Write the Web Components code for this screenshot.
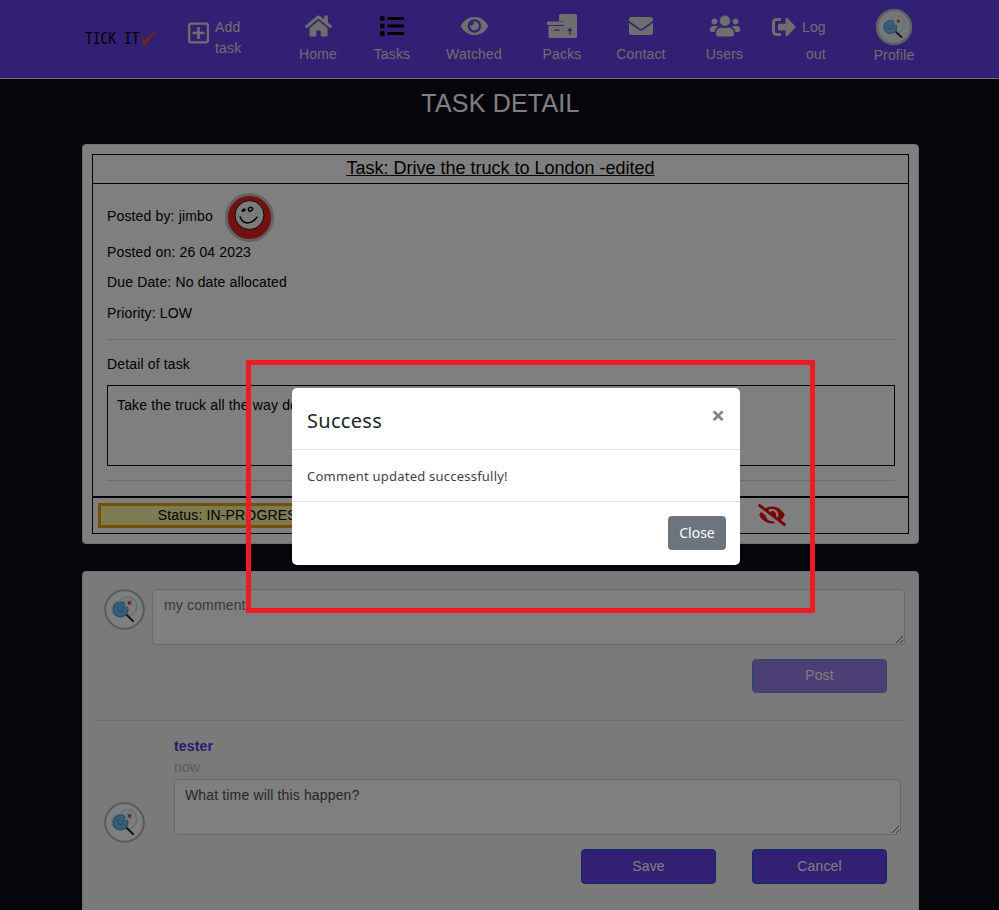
<!DOCTYPE html>
<html>
<head>
<meta charset="utf-8">
<title>Task detail</title>
<style>
    html, body {
        margin: 0;
        height: 910px;
        overflow: hidden;
        background: #0e0a18;
        font-family: "Liberation Sans", Arial, sans-serif;
        font-size: 14px;
        letter-spacing: .15px;
    }
</style>
</head>
<body>
<task-page></task-page>

<script>
//icons
const ICONS = {
    home: ['0 0 576 512', 'M280.37 148.26L96 300.11V464a16 16 0 0 0 16 16l112.06-.29a16 16 0 0 0 15.92-16V368a16 16 0 0 1 16-16h64a16 16 0 0 1 16 16v95.64a16 16 0 0 0 16 16.05L464 480a16 16 0 0 0 16-16V300L295.67 148.26a12.19 12.19 0 0 0-15.3 0zM571.6 251.47L488 182.56V44.05a12 12 0 0 0-12-12h-56a12 12 0 0 0-12 12v72.61L318.47 43a48 48 0 0 0-61 0L4.34 251.47a12 12 0 0 0-1.6 16.9l25.5 31A12 12 0 0 0 45.15 301l235.22-193.74a12.19 12.19 0 0 1 15.3 0L530.9 301a12 12 0 0 0 16.9-1.6l25.5-31a12 12 0 0 0-1.7-16.93z'],
    list: ['0 0 512 512', 'M80 368H16a16 16 0 0 0-16 16v64a16 16 0 0 0 16 16h64a16 16 0 0 0 16-16v-64a16 16 0 0 0-16-16zm0-320H16A16 16 0 0 0 0 64v64a16 16 0 0 0 16 16h64a16 16 0 0 0 16-16V64a16 16 0 0 0-16-16zm0 160H16a16 16 0 0 0-16 16v64a16 16 0 0 0 16 16h64a16 16 0 0 0 16-16v-64a16 16 0 0 0-16-16zm416 176H176a16 16 0 0 0-16 16v32a16 16 0 0 0 16 16h320a16 16 0 0 0 16-16v-32a16 16 0 0 0-16-16zm0-320H176a16 16 0 0 0-16 16v32a16 16 0 0 0 16 16h320a16 16 0 0 0 16-16V80a16 16 0 0 0-16-16zm0 160H176a16 16 0 0 0-16 16v32a16 16 0 0 0 16 16h320a16 16 0 0 0 16-16v-32a16 16 0 0 0-16-16z'],
    eye: ['0 0 576 512', 'M572.52 241.4C518.29 135.59 410.93 64 288 64S57.68 135.64 3.48 241.41a32.35 32.35 0 0 0 0 29.19C57.71 376.41 165.07 448 288 448s230.32-71.64 284.52-177.41a32.35 32.35 0 0 0 0-29.19zM288 400a144 144 0 1 1 144-144 143.93 143.93 0 0 1-144 144zm0-240a95.31 95.31 0 0 0-25.31 3.79 47.85 47.85 0 0 1-66.9 66.9A95.78 95.78 0 1 0 288 160z'],
    envelope: ['0 0 512 512', 'M502.3 190.8c3.9-3.1 9.7-.2 9.7 4.7V400c0 26.5-21.5 48-48 48H48c-26.5 0-48-21.5-48-48V195.6c0-5 5.7-7.8 9.7-4.7 22.4 17.4 52.1 39.5 154.1 113.6 21.1 15.4 56.7 47.8 92.2 47.6 35.7.3 72-32.8 92.3-47.6 102-74.1 131.6-96.3 154-113.7zM256 320c23.2.4 56.6-29.2 73.4-41.4 132.7-96.3 142.8-104.7 173.4-128.7 5.8-4.5 9.2-11.5 9.2-18.9v-19c0-26.5-21.5-48-48-48H48C21.5 64 0 85.5 0 112v19c0 7.4 3.4 14.3 9.2 18.9 30.6 23.9 40.7 32.4 173.4 128.7 16.8 12.2 50.2 41.8 73.4 41.4z'],
    users: ['0 0 640 512', 'M96 224c35.3 0 64-28.7 64-64s-28.7-64-64-64-64 28.7-64 64 28.7 64 64 64zm448 0c35.3 0 64-28.7 64-64s-28.7-64-64-64-64 28.7-64 64 28.7 64 64 64zm32 32h-64c-17.6 0-33.5 7.1-45.1 18.6 40.3 22.1 68.9 62 75.1 109.4h66c17.7 0 32-14.3 32-32v-32c0-35.3-28.7-64-64-64zm-256 0c61.9 0 112-50.1 112-112S381.9 32 320 32 208 82.1 208 144s50.1 112 112 112zm76.8 32h-8.3c-20.8 10-43.9 16-68.5 16s-47.6-6-68.5-16h-8.3C179.6 288 128 339.6 128 403.2V432c0 26.5 21.5 48 48 48h288c26.5 0 48-21.5 48-48v-28.8c0-63.6-51.6-115.2-115.2-115.2zm-223.7-13.4C161.5 263.1 145.6 256 128 256H64c-35.3 0-64 28.7-64 64v32c0 17.7 14.3 32 32 32h65.9c6.3-47.4 34.9-87.3 75.2-109.4z'],
    logout: ['0 0 512 512', 'M497 273L329 441c-15 15-41 4.5-41-17v-96H152c-13.3 0-24-10.7-24-24v-96c0-13.3 10.7-24 24-24h136V88c0-21.4 25.9-32 41-17l168 168c9.3 9.4 9.3 24.6 0 34zM192 436v-40c0-6.6-5.4-12-12-12H96c-17.7 0-32-14.3-32-32V160c0-17.7 14.3-32 32-32h84c6.6 0 12-5.4 12-12V76c0-6.6-5.4-12-12-12H96c-53 0-96 43-96 96v192c0 53 43 96 96 96h84c6.6 0 12-5.4 12-12z'],
    plus: ['0 0 448 512', 'M352 240v32c0 6.6-5.4 12-12 12h-88v88c0 6.6-5.4 12-12 12h-32c-6.6 0-12-5.4-12-12v-88h-88c-6.6 0-12-5.4-12-12v-32c0-6.6 5.4-12 12-12h88v-88c0-6.6 5.4-12 12-12h32c6.6 0 12 5.4 12 12v88h88c6.6 0 12 5.4 12 12zm96-160v352c0 26.5-21.5 48-48 48H48c-26.5 0-48-21.5-48-48V80c0-26.5 21.5-48 48-48h352c26.5 0 48 21.5 48 48zm-48 346V86c0-3.3-2.7-6-6-6H54c-3.3 0-6 2.7-6 6v340c0 3.3 2.7 6 6 6h340c3.3 0 6-2.7 6-6z'],
    eyeslash: ['0 0 640 512', 'M320 400c-75.85 0-137.25-58.71-142.9-133.11L72.2 185.82c-13.79 17.3-26.48 35.59-36.72 55.59a32.35 32.35 0 0 0 0 29.19C89.71 376.41 197.07 448 320 448c26.91 0 52.87-4 77.89-10.46L346 397.39a144.13 144.13 0 0 1-26 2.61zm313.82 58.1l-110.55-85.44a331.25 331.25 0 0 0 81.25-102.07 32.35 32.35 0 0 0 0-29.19C550.29 135.59 442.93 64 320 64a308.15 308.15 0 0 0-147.32 37.7L45.46 3.37A16 16 0 0 0 23 6.18L3.37 31.45A16 16 0 0 0 6.18 53.9l588.36 454.73a16 16 0 0 0 22.46-2.81l19.64-25.27a16 16 0 0 0-2.82-22.45zm-183.72-142l-39.3-30.38A94.75 94.75 0 0 0 416 256a94.76 94.76 0 0 0-121.31-92.21A47.65 47.65 0 0 1 304 192a46.64 46.64 0 0 1-1.54 10l-73.61-56.89A142.31 142.31 0 0 1 320 112a143.92 143.92 0 0 1 144 144c0 21.63-5.29 41.79-13.9 60.11z']
};

class FaIcon extends HTMLElement {
    constructor(){
        super();
        this.attachShadow({mode: 'open'});
        const icon = ICONS[this.getAttribute('name')];
        this.shadowRoot.innerHTML = `
        <style>
            :host { display: block; line-height: 0; }
            svg { width: 100%; height: 100%; fill: currentColor; display: block; }
        </style>
        <svg viewBox="${icon[0]}"><path d="${icon[1]}"/></svg>`;
    }
}
customElements.define('fa-icon', FaIcon);

class PacksIcon extends HTMLElement {
    constructor(){
        super();
        this.attachShadow({mode: 'open'});
        this.shadowRoot.innerHTML = `
        <style>
            :host { display: block; line-height: 0; }
        </style>
        <svg width="30" height="24" viewBox="0 0 30 24" fill="#dcdcdc">
            <path d="M12 1.500a1.500 1.500 0 0 1 1.500-1.500h15A1.500 1.500 0 0 1 30 1.500v21a1.500 1.500 0 0 1-1.500 1.500H17V7h-5z"/>
            <rect x="0" y="7.500" width="17" height="3.400" rx=".6"/>
            <path d="M1.500 12h15.500v12H2.500a1 1 0 0 1-1-1z"/>
            <rect x="7" y="15.500" width="5.500" height="1.300" fill="#6540ea"/>
            <path d="M23 13.500l2.800 3.600h-2.100V21h-1.400v-3.900h-2.100z" fill="#6540ea"/>
        </svg>`;
    }
}
customElements.define('packs-icon', PacksIcon);

//user pictures
class UserAvatar extends HTMLElement {
    constructor(){
        super();
        this.attachShadow({mode: 'open'});
        const kind = this.getAttribute('kind');
        const size = this.getAttribute('size');
        const ring = this.getAttribute('ring') || '#b4b4b4';
        const face = `
            <circle cx="50" cy="50" r="47" fill="#e62020" stroke="#c4c4c4" stroke-width="6"/>
            <circle cx="50" cy="45" r="29.500" fill="#f6f6f6" stroke="#000" stroke-width="1.800"/>
            <ellipse cx="38" cy="35" rx="4.500" ry="3.400" fill="#000" transform="rotate(-30 38 35)"/>
            <ellipse cx="52" cy="33" rx="4.500" ry="3.600" fill="none" stroke="#000" stroke-width="3" transform="rotate(-30 52 33)"/>
            <path d="M31 49q4 12 15 12 12 0 19-12" fill="none" stroke="#000" stroke-width="3" stroke-linecap="round"/>`;
        const lens = `
            <circle cx="50" cy="50" r="47" fill="${this.getAttribute('fill') || '#fff'}" stroke="${ring}" stroke-width="${this.getAttribute('stroke') || 5}"/>
            <ellipse cx="58" cy="42" rx="22" ry="23" fill="none" stroke="#cbe6f6" stroke-width="5"/>
            <ellipse cx="40" cy="48" rx="24" ry="22" fill="#dceff9"/>
            <circle cx="40" cy="50" r="18" fill="#72bbe8" stroke="#4f9fd2" stroke-width="3"/>
            <path d="M33 52q7 6 14 0" fill="none" stroke="#3a80ae" stroke-width="2"/>
            <circle cx="33" cy="46" r="1.800" fill="#3a80ae"/>
            <circle cx="46" cy="46" r="1.800" fill="#3a80ae"/>
            <path d="M56 64l15 14" stroke="#223" stroke-width="5" stroke-linecap="round"/>
            <rect x="52" y="24" width="20" height="20" rx="5" fill="#f4f4f4"/>
            <path d="M58 30l8 8m0-8l-8 8" stroke="#d0282e" stroke-width="3"/>`;
        this.shadowRoot.innerHTML = `
        <style>
            :host { display: block; line-height: 0; flex: none; width: ${size}px; height: ${size}px; }
        </style>
        <svg width="${size}" height="${size}" viewBox="0 0 100 100">${kind === 'smile' ? face : lens}</svg>`;
    }
}
customElements.define('user-avatar', UserAvatar);

//one link of the top bar
class NavItem extends HTMLElement {
    constructor(){
        super();
        this.attachShadow({mode: 'open'});
        this.shadowRoot.innerHTML = `
        <style>
            :host {
                display: flex;
                flex-direction: column;
                align-items: center;
                flex: none;
                color: #dcdcdc;
                font-size: 14px;
                width: var(--w);
            }
            .icon { height: 24px; margin-top: 14px; display: flex; align-items: center; justify-content: center; }
            .label { margin-top: 7px; line-height: 18px; }
        </style>
        <div class="icon"><slot name="icon"></slot></div>
        <div class="label"><slot></slot></div>`;
    }
}
customElements.define('nav-item', NavItem);

const headerTemplate = document.createElement('template');
headerTemplate.innerHTML = `
<style>
    :host {
        display: flex;
        height: 78px;
        background: #6540ea;
        border-bottom: 1px solid #e4e4e4;
        color: #dcdcdc;
    }
    .logo {
        width: 77px;
        margin-left: 85px;
        flex: none;
        display: flex;
        align-items: center;
    }
    .logo span {
        font-family: "DejaVu Sans Mono", monospace;
        font-size: 13px;
        letter-spacing: -.05px;
        color: #000;
        white-space: nowrap;
        flex: none;
        margin-top: -1px;
        transform: scaleY(1.15);
    }
    .logo svg { margin-left: 1px; margin-top: -3px; flex: none; }
    .add {
        display: flex;
        flex: none;
        margin-left: 26px;
        width: 93px;
    }
    .add fa-icon { width: 21px; height: 24px; margin-top: 21px; }
    .add .text { margin-left: 6px; margin-top: 17px; line-height: 20.5px; }
    .logout { width: 92px; flex: none; display: grid; grid-template-columns: 24px auto; grid-template-rows: auto auto; font-size: 14px; align-content: start; }
    .logout fa-icon { width: 24px; height: 24px; margin-top: 15px; }
    .logout .log { margin: 18px 0 0 6px; line-height: 18px; }
    .logout .out { grid-column: 2; margin: 6px 0 0 10px; line-height: 18px; }
    .logout .log, .logout .out { white-space: nowrap; }
    .profile-inner {
        display: flex;
        flex-direction: column;
        align-items: center;
        width: 60px;
        flex: none;
        font-size: 14px;
    }
    .profile-inner user-avatar { margin-top: 9px; }
    .profile-inner div { margin-top: 1px; line-height: 18px; }
</style>
<div class="logo">
    <span>TICK IT</span>
    <svg width="22" height="17" viewBox="0 0 22 17"><path d="M0 5.500C2 6 3.200 8 4.600 12 8 6.500 13 2.500 21.500 1.200 14 3.500 9.500 8.500 6 16.500L3.600 16C3 12 1.800 8 0 5.500z" fill="#e04a3e"/></svg>
</div>
<div class="add">
    <fa-icon name="plus"></fa-icon>
    <div class="text">Add<br>task</div>
</div>
<nav-item style="--w:74px"><fa-icon slot="icon" name="home" style="width:27px;height:24px"></fa-icon>Home</nav-item>
<nav-item style="--w:74px"><fa-icon slot="icon" name="list" style="width:24px;height:24px;color:#000"></fa-icon>Tasks</nav-item>
<nav-item style="--w:90px"><fa-icon slot="icon" name="eye" style="width:27px;height:24px"></fa-icon>Watched</nav-item>
<nav-item style="--w:86px"><packs-icon slot="icon"></packs-icon>Packs</nav-item>
<nav-item style="--w:72px"><fa-icon slot="icon" name="envelope" style="width:24px;height:24px"></fa-icon>Contact</nav-item>
<nav-item style="--w:95px"><fa-icon slot="icon" name="users" style="width:30px;height:24px"></fa-icon>Users</nav-item>
<div class="logout">
    <fa-icon name="logout"></fa-icon>
    <div class="log">Log</div>
    <div class="out">out</div>
</div>
<div class="profile-inner">
    <user-avatar size="36" ring="#c4c4c4" fill="#e6eef0" stroke="7"></user-avatar>
    <div>Profile</div>
</div>`;
class AppHeader extends HTMLElement {
    constructor(){
        super();
        this.attachShadow({mode: 'open'});
        this.shadowRoot.appendChild(headerTemplate.content.cloneNode(true));
    }
}
customElements.define('app-header', AppHeader);

//task panel
const taskTemplate = document.createElement('template');
taskTemplate.innerHTML = `
<style>
    :host {
        display: block;
        box-sizing: border-box;
        height: 400px;
        padding: 9px;
        background: #fff;
        border: 1px solid #dedede;
        border-radius: 4px;
        color: #000;
    }
    .frame { border: 1px solid #000; height: 100%; box-sizing: border-box; }
    .title {
        height: 28px;
        line-height: 26px;
        border-bottom: 1px solid #000;
        text-align: center;
        font-size: 18px;
        letter-spacing: 0;
        text-decoration: underline;
    }
    .body { padding: 0 13px 0 14px; }
    .posted { display: flex; align-items: center; height: 49px; margin-top: 9px; }
    .posted span { margin-bottom: 3px; }
    .posted user-avatar { margin-left: 12px; }
    .line { line-height: 21px; }
    .due { margin-top: 9px; }
    .prio { margin-top: 10px; }
    hr { border: 0; border-top: 1px solid #ddd; margin: 0; }
    .h1 { margin-top: 15px; }
    .detail { margin-top: 14px; }
    .box {
        margin-top: 10px;
        height: 81px;
        box-sizing: border-box;
        border: 1px solid #000;
        padding: 9px;
        line-height: 20px;
        white-space: nowrap;
        overflow: hidden;
    }
    .h2 { margin-top: 14px; }
    .status {
        margin-top: 15px;
        border-top: 2px solid #000;
        height: 35px;
        display: flex;
        align-items: flex-start;
    }
    .badge {
        box-sizing: border-box;
        width: 268px;
        height: 25px;
        margin: 5px 0 0 5px;
        border: 3px solid #e8a010;
        background: #fbf6a2;
        text-align: center;
        line-height: 19px;
    }
    .status fa-icon { width: 28px; height: 24px; margin: 5px 0 0 392px; color: #f00000; }
</style>
<div class="frame">
    <div class="title">Task: Drive the truck to London -edited</div>
    <div class="body">
        <div class="posted"><span>Posted by: jimbo</span><user-avatar kind="smile" size="49"></user-avatar></div>
        <div class="line">Posted on: 26 04 2023</div>
        <div class="line due">Due Date: No date allocated</div>
        <div class="line prio">Priority: LOW</div>
        <hr class="h1">
        <div class="line detail">Detail of task</div>
        <div class="box">Take the truck all the way do</div>
        <hr class="h2">
    </div>
    <div class="status">
        <div class="badge">Status: IN-PROGRESS</div>
        <fa-icon name="eyeslash"></fa-icon>
    </div>
</div>`;
class TaskPanel extends HTMLElement {
    constructor(){
        super();
        this.attachShadow({mode: 'open'});
        this.shadowRoot.appendChild(taskTemplate.content.cloneNode(true));
    }
}
customElements.define('task-panel', TaskPanel);

//textarea look-alike so the text stays real text
class NoteBox extends HTMLElement {
    constructor(){
        super();
        this.attachShadow({mode: 'open'});
        this.shadowRoot.innerHTML = `
        <style>
            :host { display: block; }
            .area {
                box-sizing: border-box;
                height: 56px;
                padding: 5px var(--pad, 11px);
                border: 1px solid #ced4da;
                border-radius: 4px;
                background: #fff;
                color: var(--ink, #495057);
                line-height: 21px;
                overflow: auto;
                resize: both;
            }
        </style>
        <div class="area"><slot></slot></div>`;
    }
}
customElements.define('note-box', NoteBox);

class PurpleButton extends HTMLElement {
    constructor(){
        super();
        this.attachShadow({mode: 'open'});
        this.shadowRoot.innerHTML = `
        <style>
            :host {
                display: block;
                box-sizing: border-box;
                width: 135px;
                height: var(--h, 35px);
                background: #6540ea;
                border: 1px solid #0d5bc9;
                border-radius: 4px;
                color: #fff;
                text-align: center;
                line-height: var(--lh, 32px);
            }
        </style>
        <slot></slot>`;
    }
}
customElements.define('purple-button', PurpleButton);

const commentTemplate = document.createElement('template');
commentTemplate.innerHTML = `
<style>
    :host {
        display: block;
        box-sizing: border-box;
        height: 420px;
        background: #f4f4f4;
        border: 1px solid #dedede;
        border-radius: 4px 4px 0 0;
        color: #000;
        padding-top: 17px;
    }
    .new { display: flex; }
    .new user-avatar { margin-left: 21px; }
    .new note-box { width: 753px; margin-left: 7px; --ink: #6c757d; }
    .post { display: flex; justify-content: flex-end; margin: 14px 31px 0 0; }
    .post purple-button { opacity: .65; --h: 34px; --lh: 30px; }
    hr { border: 0; border-top: 1px solid #d9d9d9; margin: 27px 13px 0 14px; }
    .comment { display: flex; margin-top: 16px; }
    .comment user-avatar { margin: 0 0 -8px 21px; align-self: flex-end; }
    .main { margin-left: 29px; width: 727px; }
    .name { color: #5a32e0; font-weight: bold; line-height: 18px; }
    .time { color: #b8b8b8; line-height: 18px; margin-top: 3px; }
    .main note-box { margin-top: 3px; --pad: 10px; }
    .buttons { display: flex; margin: 14px 0 0 498px; gap: 36px; }
</style>
<div class="new">
    <user-avatar size="41"></user-avatar>
    <note-box>my comment</note-box>
</div>
<div class="post"><purple-button>Post</purple-button></div>
<hr>
<div class="comment">
    <user-avatar size="41"></user-avatar>
    <div class="main">
        <div class="name">tester</div>
        <div class="time">now</div>
        <note-box>What time will this happen?</note-box>
    </div>
</div>
<div class="buttons">
    <purple-button>Save</purple-button>
    <purple-button>Cancel</purple-button>
</div>`;
class CommentPanel extends HTMLElement {
    constructor(){
        super();
        this.attachShadow({mode: 'open'});
        this.shadowRoot.appendChild(commentTemplate.content.cloneNode(true));
    }
}
customElements.define('comment-panel', CommentPanel);

//modal, the backdrop and the red marker are on top of the page
const modalTemplate = document.createElement('template');
modalTemplate.innerHTML = `
<style>
    :host { display: block; position: absolute; inset: 0; background: rgba(0,0,0,.5); letter-spacing: 0; }
    .dialog {
        position: absolute;
        left: 292px;
        top: 388px;
        width: 448px;
        height: 177px;
        background: #fff;
        border-radius: 5px;
        color: #212529;
        font-family: "Noto Sans", sans-serif;
        display: flex;
        flex-direction: column;
    }
    .head {
        height: 61px;
        border-bottom: 1px solid #dee2e6;
        display: flex;
        justify-content: space-between;
        padding: 0 15px 0 15px;
    }
    .head h5 { margin: 18px 0 0; font-size: 20px; font-weight: 400; line-height: 30px; letter-spacing: .3px; }
    .x { font-size: 24px; font-weight: 700; color: #7f7f7f; line-height: 24px; margin-top: 15px; }
    .text {
        height: 52px;
        box-sizing: border-box;
        border-bottom: 1px solid #dee2e6;
        padding: 16px 15px 0;
        font-size: 13px;
        line-height: 20px;
        letter-spacing: .22px;
        color: #3d4246;
    }
    .foot { flex: 1; display: flex; justify-content: flex-end; padding: 14px 14px 0 0; }
    .close {
        width: 58px;
        height: 34px;
        border-radius: 4px;
        background: #6c757d;
        color: #fff;
        font-size: 14px;
        text-align: center;
        line-height: 34px;
    }
    .marker {
        position: absolute;
        left: 246px;
        top: 360px;
        width: 569px;
        height: 253px;
        box-sizing: border-box;
        border: 5px solid #ed1c24;
    }
</style>
<div class="dialog">
    <div class="head"><h5>Success</h5><div class="x">×</div></div>
    <div class="text">Comment updated successfully!</div>
    <div class="foot"><div class="close">Close</div></div>
</div>
<div class="marker"></div>`;
class SuccessModal extends HTMLElement {
    constructor(){
        super();
        this.attachShadow({mode: 'open'});
        this.shadowRoot.appendChild(modalTemplate.content.cloneNode(true));
    }
}
customElements.define('success-modal', SuccessModal);

const pageTemplate = document.createElement('template');
pageTemplate.innerHTML = `
<style>
    :host { display: block; height: 910px; overflow: hidden; position: relative; }
    h1 {
        margin: 0;
        padding-top: 9px;
        height: 56px;
        text-align: center;
        font-size: 25px;
        font-weight: 400;
        letter-spacing: .2px;
        line-height: 30px;
        color: #fff;
    }
    main { margin: 0 80px 0 82px; }
    comment-panel { margin-top: 27px; }
</style>
<app-header></app-header>
<main>
    <h1>TASK DETAIL</h1>
    <task-panel></task-panel>
    <comment-panel></comment-panel>
</main>
<success-modal></success-modal>`;
class TaskPage extends HTMLElement {
    constructor(){
        super();
        this.attachShadow({mode: 'open'});
        this.shadowRoot.appendChild(pageTemplate.content.cloneNode(true));
    }
}
customElements.define('task-page', TaskPage);
</script>
</body>
</html>
